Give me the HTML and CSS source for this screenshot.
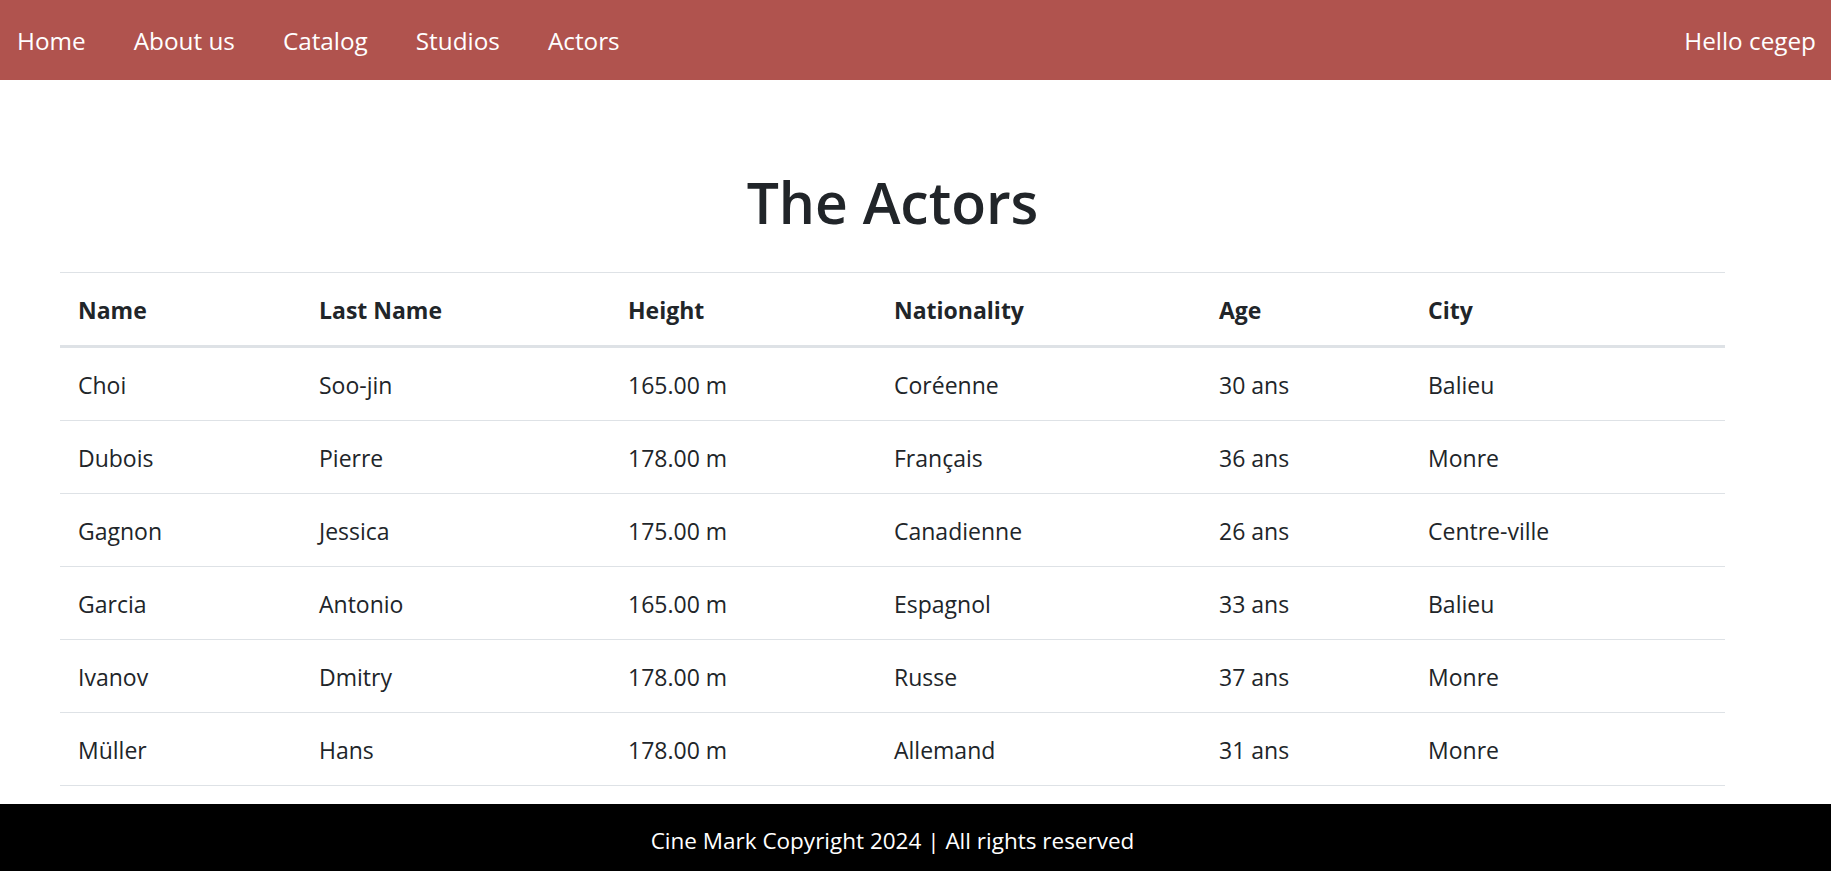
FILE: index.html
```html
<!DOCTYPE html>
<html lang="en">
<head>
<meta charset="utf-8">
<title>The Actors</title>
<link rel="stylesheet" href="styles.css">
</head>
<body>
<header class="navbar">
  <nav class="nav-links">
    <a href="#">Home</a>
    <a href="#">About us</a>
    <a href="#">Catalog</a>
    <a href="#">Studios</a>
    <a href="#">Actors</a>
  </nav>
  <span class="greeting">Hello cegep</span>
</header>
<main class="container">
  <h1 class="title">The Actors</h1>
  <table class="actors">
    <colgroup>
      <col class="c1"><col class="c2"><col class="c3"><col class="c4"><col class="c5"><col class="c6">
    </colgroup>
    <thead>
      <tr><th>Name</th><th>Last Name</th><th>Height</th><th>Nationality</th><th>Age</th><th>City</th></tr>
    </thead>
    <tbody>
      <tr><td>Choi</td><td>Soo-jin</td><td>165.00 m</td><td>Coréenne</td><td>30 ans</td><td>Balieu</td></tr>
      <tr><td>Dubois</td><td>Pierre</td><td>178.00 m</td><td>Français</td><td>36 ans</td><td>Monre</td></tr>
      <tr><td>Gagnon</td><td>Jessica</td><td>175.00 m</td><td>Canadienne</td><td>26 ans</td><td>Centre-ville</td></tr>
      <tr><td>Garcia</td><td>Antonio</td><td>165.00 m</td><td>Espagnol</td><td>33 ans</td><td>Balieu</td></tr>
      <tr><td>Ivanov</td><td>Dmitry</td><td>178.00 m</td><td>Russe</td><td>37 ans</td><td>Monre</td></tr>
      <tr><td>Müller</td><td>Hans</td><td>178.00 m</td><td>Allemand</td><td>31 ans</td><td>Monre</td></tr>
    </tbody>
  </table>
</main>
<footer class="footer">
  <div class="footer-inner">Cine Mark Copyright 2024 | All rights reserved</div>
</footer>
</body>
</html>
```
FILE: styles.css
```css
* { box-sizing: border-box; }

html, body {
  margin: 0;
  padding: 0;
}

body {
  font-family: "Open Sans", "Noto Sans", sans-serif;
  color: #212529;
  background: #fff;
  font-size: 23px;
  line-height: 36px;
}

.navbar {
  height: 80px;
  background: #b0534e;
  display: flex;
  align-items: center;
  justify-content: space-between;
  padding: 2px 15px 0 17px;
}

.nav-links {
  display: flex;
  gap: 48px;
}

.nav-links a,
.greeting {
  color: #fff;
  text-decoration: none;
  font-size: 24.3px;
  line-height: 34px;
}

.container {
  width: 1665px;
  margin-left: 60px;
}

.title {
  margin: 87px 0 34px;
  text-align: center;
  font-size: 57px;
  font-weight: 600;
  line-height: 71px;
  color: #212529;
}

.actors {
  width: 1665px;
  border-collapse: collapse;
  table-layout: fixed;
}

.c1 { width: 241px; }
.c2 { width: 309px; }
.c3 { width: 266px; }
.c4 { width: 325px; }
.c5 { width: 209px; }
.c6 { width: 315px; }

.actors th,
.actors td {
  text-align: left;
  padding: 19px 18px 17px;
  vertical-align: top;
}

.actors th {
  font-weight: 700;
  border-top: 1px solid #dee2e6;
  border-bottom: 3px solid #dee2e6;
}

.actors td {
  font-weight: 400;
  border-bottom: 1px solid #dee2e6;
}

.footer {
  margin-top: 18px;
  background: #000;
  color: #fff;
  padding: 22px 0 17px;
}

.footer-inner {
  width: 1665px;
  margin-left: 60px;
  text-align: center;
  font-size: 22.5px;
  line-height: 30px;
}
```
